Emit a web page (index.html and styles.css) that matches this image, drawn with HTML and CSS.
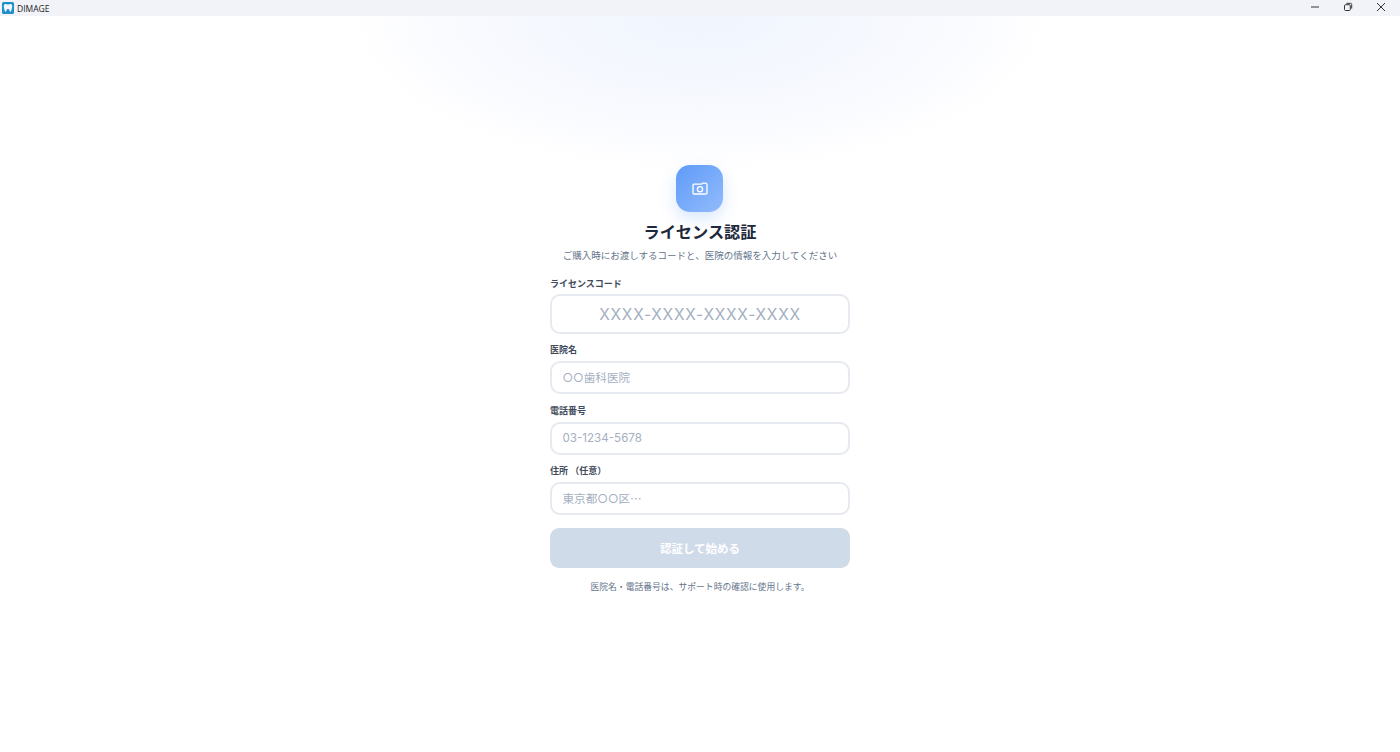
FILE: index.html
```html
<!DOCTYPE html>
<html lang="ja">
<head>
<meta charset="utf-8">
<title>DIMAGE</title>
<link rel="stylesheet" href="styles.css">
</head>
<body>
<header class="titlebar">
  <div class="brand">
    <svg class="brand-icon" viewBox="0 0 12 12" width="12" height="12" aria-hidden="true">
      <rect width="12" height="12" rx="1.500" fill="#1f8fc9"/>
      <path d="M2.600 2.300c1.100-.5 2.200 0 3.400.2 1.200-.2 2.300-.7 3.400-.2 1 .6 1 2.300.6 3.500-.3.900-.5 3.800-1.500 4-.9.100-.8-2.900-2.500-2.900s-1.600 3-2.500 2.900c-1-.2-1.200-3.100-1.500-4-.4-1.200-.4-2.900.6-3.500z" fill="#eef8fd"/>
    </svg>
    <span>DIMAGE</span>
  </div>
  <div class="controls">
    <svg class="control" viewBox="0 0 10 10" aria-hidden="true"><path d="M1 5h8" /></svg>
    <svg class="control" viewBox="0 0 10 10" aria-hidden="true"><rect x="1.500" y="2.700" width="5.800" height="5.800" rx="1"/><path d="M3.400 1.300h4c.8 0 1.300.5 1.300 1.300v4"/></svg>
    <svg class="control" viewBox="0 0 10 10" aria-hidden="true"><path d="M1 1l8 8M9 1l-8 8"/></svg>
  </div>
</header>
<main class="page">
  <form class="card">
    <div class="logo">
      <svg viewBox="0 0 16 16" width="16" height="16" aria-hidden="true">
        <path class="logo-line" d="M1 4.200c0-.6.400-1 1-1h7.500l1.200-1h2.300c1 0 2 .8 2 1.800v8c0 .6-.4 1-1 1H2c-.6 0-1-.4-1-1z"/>
        <circle class="logo-line" cx="8" cy="8.300" r="2.600"/>
      </svg>
    </div>
    <h1 class="title">ライセンス認証</h1>
    <p class="lead">ご購入時にお渡しするコードと、医院の情報を入力してください</p>
    <label class="field field-code">
      <span class="label">ライセンスコード</span>
      <input class="input input-code" type="text" placeholder="XXXX-XXXX-XXXX-XXXX">
    </label>
    <label class="field">
      <span class="label">医院名</span>
      <input class="input" type="text" placeholder="○○歯科医院">
    </label>
    <label class="field">
      <span class="label">電話番号</span>
      <input class="input" type="text" placeholder="03-1234-5678">
    </label>
    <label class="field">
      <span class="label">住所 （任意）</span>
      <input class="input" type="text" placeholder="東京都○○区⋯">
    </label>
    <button class="submit" type="button">認証して始める</button>
    <p class="note">医院名・電話番号は、サポート時の確認に使用します。</p>
  </form>
</main>
</body>
</html>
```
FILE: styles.css
```css
* { box-sizing: border-box; }
html, body { height: 100%; margin: 0; }
body {
  display: flex;
  flex-direction: column;
  background: #fff;
  color: #1e293b;
  font-family: Inter, "Noto Sans CJK JP", sans-serif;
  overflow: hidden;
}
.titlebar {
  flex: none;
  height: 16px;
  display: flex;
  align-items: center;
  justify-content: space-between;
  background: #f1f3f8;
}
.brand {
  display: flex;
  align-items: center;
  gap: 3px;
  padding-left: 2px;
  font-family: "Open Sans", sans-serif;
  font-size: 8.500px;
  color: #222;
}
.brand-icon { display: block; }
.controls {
  display: flex;
  gap: 17px;
  padding-right: 11px;
  margin-top: -2px;
}
.control {
  width: 16px;
  height: 10px;
  fill: none;
  stroke: #333;
  stroke-width: 1;
}
.page {
  flex: 1;
  display: flex;
  justify-content: center;
  padding-top: 149px;
  background: radial-gradient(ellipse 350px 155px at 50% 0, #f0f5fe 0%, #f5f8fe 45%, #fafbff 75%, #fff 100%);
}
.card {
  width: 300px;
  display: flex;
  flex-direction: column;
  align-items: stretch;
}
.logo {
  width: 47px;
  height: 47px;
  align-self: center;
  margin-right: 1px;
  display: flex;
  align-items: center;
  justify-content: center;
  border-radius: 14px;
  background: linear-gradient(135deg, #5f9bf8, #92bbfb);
  box-shadow: 0 6px 16px rgba(96, 155, 248, .25);
}
.logo-line {
  fill: none;
  stroke: #fff;
  stroke-width: 1.300;
}
.title {
  margin: 9px 0 0;
  font-size: 16.200px;
  line-height: 22px;
  font-weight: 700;
  text-align: center;
  color: #1e293b;
}
.lead {
  margin: 6px 0 0;
  font-size: 9.500px;
  line-height: 14px;
  text-align: center;
  color: #64748b;
}
.field {
  display: flex;
  flex-direction: column;
  margin-top: 10.500px;
}
.field-code {
  margin-top: 15px;
  margin-bottom: -.5px;
}
.label {
  font-size: 9px;
  line-height: 12px;
  font-weight: 700;
  color: #3f4b5c;
  margin-bottom: 5px;
  white-space: pre;
}
.field-code .label { margin-bottom: 4px; }
.input {
  height: 33px;
  width: 100%;
  padding: 0 10.500px;
  border: 2px solid #e6e9ef;
  border-radius: 10px;
  background: #fff;
  font-family: inherit;
  font-size: 11.600px;
  color: #1e293b;
  outline: none;
}
.input::placeholder { color: #a4afbf; opacity: 1; }
.input-code {
  height: 40px;
  text-align: center;
  font-size: 15.500px;
  letter-spacing: .75px;
}
.submit {
  margin-top: 13px;
  height: 40px;
  border: 0;
  border-radius: 9px;
  background: #d0dbea;
  color: #fff;
  font-family: inherit;
  font-size: 11.500px;
  font-weight: 700;
}
.note {
  margin: 12px 0 0;
  font-size: 8.800px;
  line-height: 13px;
  text-align: center;
  color: #64748b;
}
```
